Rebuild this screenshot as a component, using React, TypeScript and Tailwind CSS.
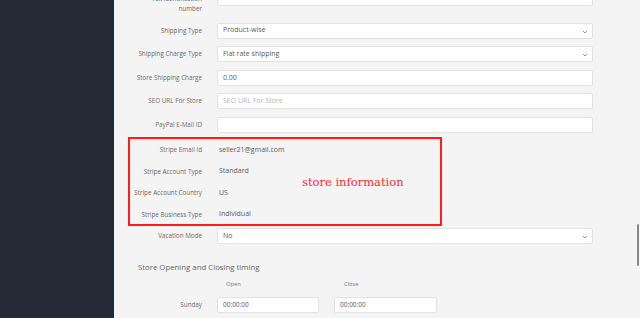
import React from "react";

const Chevron = () => (
  <svg width="6" height="4" viewBox="0 0 6 4" className="absolute right-[4px] top-[6px]">
    <path d="M1 1 L3 3 L5 1" fill="none" stroke="#888" strokeWidth="0.9" />
  </svg>
);

interface FieldProps {
  label: React.ReactNode;
  value?: string;
  placeholder?: string;
  select?: boolean;
  className?: string;
  labelClass?: string;
}

const Field: React.FC<FieldProps> = ({ label, value, placeholder, select, className = "", labelClass = "" }) => (
  <div className={`flex items-start gap-[15px] ${className}`}>
    <div className={`w-[88px] shrink-0 text-right text-[6.3px] text-[#6a6a6a] ${labelClass || "leading-[16px]"}`}>{label}</div>
    <div className="relative flex h-[16px] flex-1 items-center rounded-[2px] border border-[#e2e2e2] bg-white pl-[5px] text-[7px]">
      {value ? (
        <span className="text-[#5a5a5a]">{value}</span>
      ) : (
        <span className="text-[#b5b5b5]">{placeholder}</span>
      )}
      {select && <Chevron />}
    </div>
  </div>
);

const stripeRows = [
  { label: "Stripe Email Id", value: "seller21@gmail.com" },
  { label: "Stripe Account Type", value: "Standard" },
  { label: "Stripe Account Country", value: "US" },
  { label: "Stripe Business Type", value: "Individual" },
];

export default function App() {
  return (
    <div
      className="flex h-[318px] w-[640px] overflow-hidden bg-[#f4f4f4]"
      style={{ fontFamily: '"Open Sans", "Noto Sans", sans-serif' }}
    >
      {/* Sidebar */}
      <aside className="w-[114px] shrink-0 bg-[#252b36]" />

      {/* Main */}
      <main className="relative flex-1">
        <div className="-mt-[10.5px] pr-[47px]">
          <Field
            label={<>Tax identification<br />number</>}
            labelClass="leading-[10px] pt-[4.5px]"
            className="mb-[8.7px]"
          />
          <Field label="Shipping Type" value="Product-wise" select className="mb-[7.6px]" />
          <Field label="Shipping Charge Type" value="Flat rate shipping" select className="mb-[7.6px]" />
          <Field label="Store Shipping Charge" value="0.00" className="mb-[7.6px]" />
          <Field label="SEO URL For Store" placeholder="SEO URL For Store" className="mb-[7.6px]" />
          <Field label="PayPal E-Mail ID" />

          {/* Stripe info */}
          <div className="relative mt-[6px]">
            {stripeRows.map((row) => (
              <div key={row.label} className="flex h-[21.5px] items-center gap-[15px]">
                <div className="w-[88px] shrink-0 text-right text-[6.3px] text-[#6a6a6a]">{row.label}</div>
                <div className="pl-[2px] text-[7px] text-[#5a5a5a]">{row.value}</div>
              </div>
            ))}
            <div className="absolute left-[14px] top-[-2.5px] h-[89px] w-[314px] border-2 border-[#ff1c1c]">
              <div
                className="absolute left-[172px] top-[36px] text-[11.5px] leading-[14px] text-[#f03030]"
                style={{ fontFamily: '"DejaVu Serif", serif' }}
              >
                store information
              </div>
            </div>
          </div>

          <Field label="Vacation Mode" value="No" select className="mt-[3px]" />

          {/* Opening timings */}
          <div className="ml-[24px] mt-[17px] text-[7.8px] leading-[12px] text-[#666]">Store Opening and Closing timing</div>
          <div className="mt-[6px] flex gap-[15px] text-[5.8px] leading-[10px] text-[#777]">
            <div className="w-[88px] shrink-0" />
            <div className="w-[102px] pl-[9px]">Open</div>
            <div className="w-[103px] pl-[10px]">Close</div>
          </div>
          <div className="mt-[8px] flex items-center gap-[15px]">
            <div className="w-[88px] shrink-0 text-right text-[6.3px] leading-[16px] text-[#6a6a6a]">Sunday</div>
            <div className="flex h-[16px] w-[102px] items-center rounded-[2px] border border-[#e2e2e2] bg-white pl-[5px] text-[6.5px] text-[#5a5a5a]">
              00:00:00
            </div>
            <div className="flex h-[16px] w-[103px] items-center rounded-[2px] border border-[#e2e2e2] bg-white pl-[5px] text-[6.5px] text-[#5a5a5a]">
              00:00:00
            </div>
          </div>
        </div>

        {/* Scrollbar thumb */}
        <div className="absolute right-[1px] top-[224px] h-[42px] w-[2px] rounded-full bg-[#8a8a8a]" />
      </main>
    </div>
  );
}
